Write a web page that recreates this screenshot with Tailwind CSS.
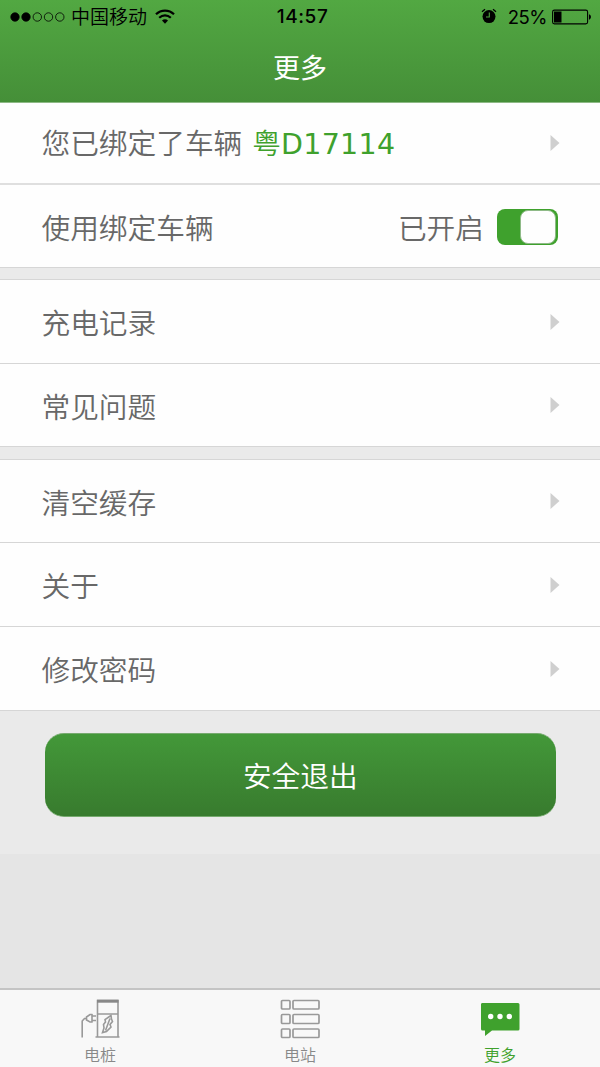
<!DOCTYPE html>
<html lang="zh-CN">
<head>
    <meta charset="UTF-8">
    <meta name="viewport" content="width=device-width, initial-scale=1.0">
    <title>更多</title>
    <script src="https://cdn.jsdelivr.net/npm/@tailwindcss/browser@4"></script>
</head>
<body class="h-[1067px] flex flex-col overflow-hidden bg-[#e5e5e5] font-['Noto_Sans_CJK_SC',sans-serif] font-[350] text-[28.7px] text-[#686868]">
    <header class="h-[103px] shrink-0 bg-linear-to-b from-[#52a842] to-[#458f38] border-b border-[#8db985]">
        <!-- Status bar -->
        <div class="h-[34px] grid grid-cols-[1fr_auto_1fr] items-center pl-[10px] pr-2 text-black font-['Inter','Noto_Sans_CJK_SC',sans-serif] font-normal text-[19px] leading-8">
            <div class="flex items-center">
                <svg class="w-[56px] h-[12px]" viewBox="0 0 56 12" stroke="#000" stroke-width=".8">
                    <circle cx="5" cy="6" r="4.2"/>
                    <circle cx="16" cy="6" r="4.2"/>
                    <circle cx="27.3" cy="6" r="4.2" fill="none"/>
                    <circle cx="38.5" cy="6" r="4.2" fill="none"/>
                    <circle cx="49.8" cy="6" r="4.2" fill="none"/>
                </svg>
                <span class="ml-[5px] pt-[2px] font-[350]">中国移动</span>
                <svg class="ml-[8px] mb-[2px] w-[20px] h-[15px]" viewBox="0 0 20 15" fill="none" stroke="#000" stroke-width="2.2">
                    <path d="M1 5.2C6 .3 14 .3 19 5.2"/>
                    <path d="M4.2 8.8C7.6 5.5 12.4 5.5 15.8 8.8"/>
                    <path d="M7 11.6C8.8 9.9 11.2 9.9 13 11.6L10 14.8Z" fill="#000" stroke="none"/>
                </svg>
            </div>
            <span class="font-medium text-[19px] tracking-[.6px] pl-[3px]">14:57</span>
            <div class="flex items-center justify-end">
                <svg class="mb-[2px] w-[16px] h-[16px]" viewBox="0 0 16 16">
                    <circle cx="8" cy="8.6" r="6.5"/>
                    <path d="M1 3.8L4 1.2M15 3.8L12 1.2" stroke="#000" stroke-width="1.3"/>
                    <path d="M8.3 4.6V9H5" fill="none" stroke="#4fa340" stroke-width="1.1"/>
                </svg>
                <span class="ml-[11px] text-[18.5px] tracking-[-.5px]">25%</span>
                <svg class="ml-[5px] w-[40px] h-[16px]" viewBox="0 0 40 16">
                    <rect x=".6" y="1.1" width="35" height="13.8" rx="1.8" fill="none" stroke="#000" stroke-width="1.1"/>
                    <rect x="2" y="2.5" width="7.5" height="11"/>
                    <path d="M37 5.3C39.6 6 39.6 10 37 10.7Z"/>
                </svg>
            </div>
        </div>
        <h1 class="h-[66px] leading-[66px] text-center text-white text-[27px] font-normal">更多</h1>
    </header>

    <main class="h-[751px] bg-[#eaeaea]">
        <section class="bg-[#fefefe] border-b border-[#d6d6d6]">
            <div class="h-[82px] border-b-2 border-[#dfdfdf] flex items-center justify-between pl-[41.5px] pr-[40px]">
                <span>您已绑定了车辆<span class="ml-[10px] text-[#3fa12d]">粤<span class="font-['DejaVu_Sans',sans-serif] text-[28.5px] font-normal tracking-[.3px]">D17114</span></span></span>
                <svg class="w-[10px] h-[16px]" viewBox="0 0 10 16" fill="#cfcfcf"><path d="M0.5 0L9.5 8L0.5 16Z"/></svg>
            </div>
            <div class="h-[82px] flex items-center pl-[41.5px] pr-[42px] pt-[2px]">
                <span class="flex-1 -mt-px">使用绑定车辆</span>
                <span class="mr-[13px] -mt-px">已开启</span>
                <div class="w-[61px] h-[36px] rounded-[8px] bg-[#3fa12d] flex justify-end p-px pr-[2px]">
                    <div class="w-[36px] h-full rounded-[8px] bg-[#fefefe] border border-[#8fba88]"></div>
                </div>
            </div>
        </section>

        <section class="mt-[11px] bg-[#fefefe] border-y border-[#d6d6d6]">
            <div class="h-[84px] border-b border-[#d6d6d6] flex items-center justify-between pl-[41.5px] pr-[40px]">
                <span>充电记录</span>
                <svg class="w-[10px] h-[16px]" viewBox="0 0 10 16" fill="#cfcfcf"><path d="M0.5 0L9.5 8L0.5 16Z"/></svg>
            </div>
            <div class="h-[82px] flex items-center justify-between pl-[41.5px] pr-[40px]">
                <span class="pt-px">常见问题</span>
                <svg class="w-[10px] h-[16px]" viewBox="0 0 10 16" fill="#cfcfcf"><path d="M0.5 0L9.5 8L0.5 16Z"/></svg>
            </div>
        </section>

        <section class="mt-[12px] bg-[#fefefe] border-y border-[#d6d6d6]">
            <div class="h-[83px] border-b border-[#d6d6d6] flex items-center justify-between pl-[41.5px] pr-[40px]">
                <span class="pt-px">清空缓存</span>
                <svg class="w-[10px] h-[16px]" viewBox="0 0 10 16" fill="#cfcfcf"><path d="M0.5 0L9.5 8L0.5 16Z"/></svg>
            </div>
            <div class="h-[84px] border-b border-[#d6d6d6] flex items-center justify-between pl-[41.5px] pr-[40px]">
                <span class="pt-px">关于</span>
                <svg class="w-[10px] h-[16px]" viewBox="0 0 10 16" fill="#cfcfcf"><path d="M0.5 0L9.5 8L0.5 16Z"/></svg>
            </div>
            <div class="h-[83px] flex items-center justify-between pl-[41.5px] pr-[40px]">
                <span class="pt-px">修改密码</span>
                <svg class="w-[10px] h-[16px]" viewBox="0 0 10 16" fill="#cfcfcf"><path d="M0.5 0L9.5 8L0.5 16Z"/></svg>
            </div>
        </section>

        <button class="block mt-[22px] ml-[44.5px] w-[511.5px] h-[84px] rounded-[19px] bg-linear-to-b from-[#439839] to-[#387b2e] border-y border-[#76aa6e] text-white">安全退出</button>
    </main>

    <!-- Tab bar -->
    <nav class="mt-auto h-[79px] shrink-0 grid grid-cols-3 bg-[#f8f8f8] border-t-2 border-[#c4c4c4] text-[16px] text-[#888]">
        <a class="flex flex-col items-center pt-[9px]">
            <svg class="w-[40px] h-[40px]" viewBox="0 0 40 40" fill="none" stroke="#999" stroke-width="1.6">
                <path d="M17.5 37.5V1.5H38V37.5M15.5 38H39.5M17.5 15H38"/>
                <path d="M17 2.2H38.5" stroke="#888" stroke-width="3"/>
                <path d="M31 16.5L25 20.5L25.5 23L23.5 25.5L24 29L22.5 33.5L26.5 32.5L31 28L30 25.5L32.5 22.5L31.5 20ZM30 19.5L25.5 31.5"/>
                <path d="M2.2 38.5V22L4.5 19.5H6.5"/>
                <path d="M12.5 15.5H10L6.5 18V21L10 23H12.5M12 15V23.5M12.5 17H16M12.5 21.5H16"/>
            </svg>
            <span class="mt-[3px] leading-6">电桩</span>
        </a>
        <a class="flex flex-col items-center pt-[9px]">
            <svg class="w-[40px] h-[40px]" viewBox="0 0 40 40" fill="none" stroke="#999" stroke-width="1.7">
                <rect x="1.5" y="1.5" width="8.5" height="8.5" rx="1"/>
                <rect x="13" y="1.5" width="26" height="8.5" rx="1"/>
                <rect x="1.5" y="15.5" width="8.5" height="9" rx="1"/>
                <rect x="13" y="15.5" width="26" height="9" rx="1"/>
                <rect x="1.5" y="30" width="8.5" height="8.5" rx="1"/>
                <rect x="13" y="30" width="26" height="8.5" rx="1"/>
            </svg>
            <span class="mt-[3px] leading-6">电站</span>
        </a>
        <a class="flex flex-col items-center pt-[9px] text-[#3fa12d]">
            <svg class="w-[40px] h-[40px]" viewBox="0 0 40 40">
                <path d="M2 4H38Q39.5 4 39.5 5.5V30Q39.5 31.5 38 31.5H12L5 37V31.5H2.5Q1 31.5 1 30V5.5Q1 4 2 4Z" fill="#3fa12d"/>
                <circle cx="10.7" cy="17.5" r="2.7" fill="#fff"/>
                <circle cx="20" cy="17.5" r="2.7" fill="#fff"/>
                <circle cx="29.3" cy="17.5" r="2.7" fill="#fff"/>
            </svg>
            <span class="mt-[3px] leading-6">更多</span>
        </a>
    </nav>
</body>
</html>
